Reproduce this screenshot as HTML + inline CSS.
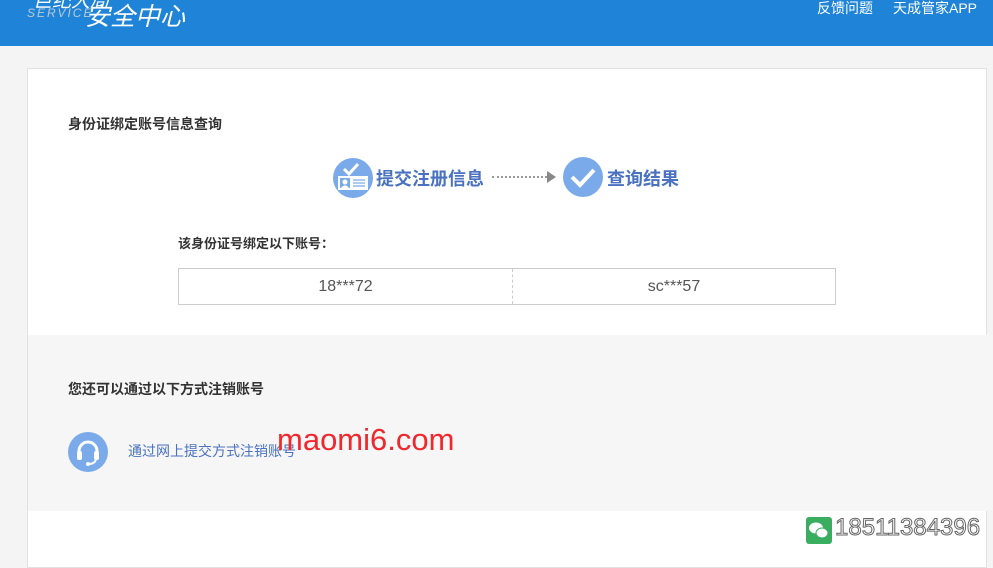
<!DOCTYPE html>
<html><head><meta charset="utf-8"><style>
*{margin:0;padding:0;box-sizing:border-box}
body{width:993px;height:558px;overflow:hidden;background:#f4f4f4;font-family:"Liberation Sans","Noto Sans CJK SC",sans-serif;position:relative}
.hd{position:absolute;left:0;top:0;width:993px;height:46px;background:#1f84d7}
.abs{position:absolute;white-space:nowrap}
.card{position:absolute;left:27px;top:68px;width:960px;height:500px;background:#fff;border:1px solid #e2e2e2}
.gray{position:absolute;left:0;top:266px;width:966px;height:176px;background:#f6f6f6}
</style></head><body>
<div class="hd">
<div class="abs" style="left:33px;top:-14px;color:#fff;font-size:19px;font-style:italic">巨纪大局</div>
<div class="abs" style="left:27px;top:6px;color:#b8c9d8;font-size:12px;font-style:italic;letter-spacing:2px">SERVICE</div>
<div class="abs" style="left:85px;top:-3px;color:#fff;font-size:25px;font-style:italic">安全中心</div>
<div class="abs" style="left:817px;top:-2px;color:#fff;font-size:14px">反馈问题</div>
<div class="abs" style="left:893px;top:-2px;color:#fff;font-size:14px">天成管家APP</div>
</div>
<div class="card">
<div class="abs" style="left:40px;top:45px;font-size:14px;font-weight:bold;color:#333">身份证绑定账号信息查询</div>
<svg class="abs" style="left:304px;top:88px" width="42" height="42" viewBox="0 0 42 42"><circle cx="21" cy="21" r="20" fill="#7aaaea"/><path d="M12 12l5 5 9-10" stroke="#fff" stroke-width="3" fill="none"/><rect x="6" y="19" width="30" height="14" fill="#fff"/><rect x="8" y="21" width="10" height="10" fill="#7aaaea"/><circle cx="13" cy="25" r="2.5" fill="#fff"/><path d="M9 31q4-5 8 0z" fill="#fff"/><path d="M21 23h12M21 26h12M21 29h12" stroke="#7aaaea" stroke-width="1.2"/></svg>
<div class="abs" style="left:348px;top:96px;font-size:18px;font-weight:bold;color:#4a72c0">提交注册信息</div>
<div class="abs" style="left:464px;top:107px;width:55px;border-top:2px dotted #999"></div>
<div class="abs" style="left:519px;top:102px;width:0;height:0;border-left:9px solid #888;border-top:6px solid transparent;border-bottom:6px solid transparent"></div>
<svg class="abs" style="left:535px;top:88px" width="40" height="40" viewBox="0 0 40 40"><circle cx="20" cy="20" r="20" fill="#7aaaea"/><path d="M9 20l8 8 14-15" stroke="#fff" stroke-width="4" fill="none"/></svg>
<div class="abs" style="left:579px;top:96px;font-size:18px;font-weight:bold;color:#4a72c0">查询结果</div>
<div class="abs" style="left:150px;top:164px;font-size:13px;font-weight:bold;color:#333">该身份证号绑定以下账号：</div>
<div class="abs" style="left:150px;top:199px;width:658px;height:37px;border:1px solid #ccc;display:flex">
<div style="width:334px;text-align:center;line-height:35px;font-size:16px;color:#555;border-right:1px dashed #ccc">18***72</div>
<div style="flex:1;text-align:center;line-height:35px;font-size:16px;color:#555">sc***57</div></div>
<div class="gray">
<div class="abs" style="left:40px;top:44px;font-size:14px;font-weight:bold;color:#333">您还可以通过以下方式注销账号</div>
<svg class="abs" style="left:40px;top:97px" width="40" height="40" viewBox="0 0 40 40"><circle cx="20" cy="20" r="20" fill="#7aaaea"/><path d="M11 24v-5a9 9 0 0 1 18 0v5" stroke="#fff" stroke-width="3" fill="none"/><rect x="9" y="19" width="5" height="9" rx="2" fill="#fff"/><rect x="26" y="19" width="5" height="9" rx="2" fill="#fff"/><path d="M28 28q-2 4-7 4" stroke="#fff" stroke-width="2" fill="none"/><circle cx="20" cy="32" r="2" fill="#fff"/></svg>
<div class="abs" style="left:100px;top:106px;font-size:14px;color:#4a72c0">通过网上提交方式注销账号</div>
</div>
</div>
<div class="abs" style="left:277px;top:422px;font-size:31px;color:#f0282d">maomi6.com</div>
<svg class="abs" style="left:806px;top:517px" width="26" height="27" viewBox="0 0 26 27"><rect width="26" height="27" rx="3" fill="#3aae5f"/><ellipse cx="10" cy="11" rx="7" ry="5.5" fill="#fff"/><ellipse cx="16" cy="16" rx="6" ry="5" fill="#fff" stroke="#3aae5f" stroke-width="1"/></svg>
<div class="abs" style="left:835px;top:514px;font-size:24px;color:#fff;-webkit-text-stroke:1px #666">18511384396</div>
</body></html>
